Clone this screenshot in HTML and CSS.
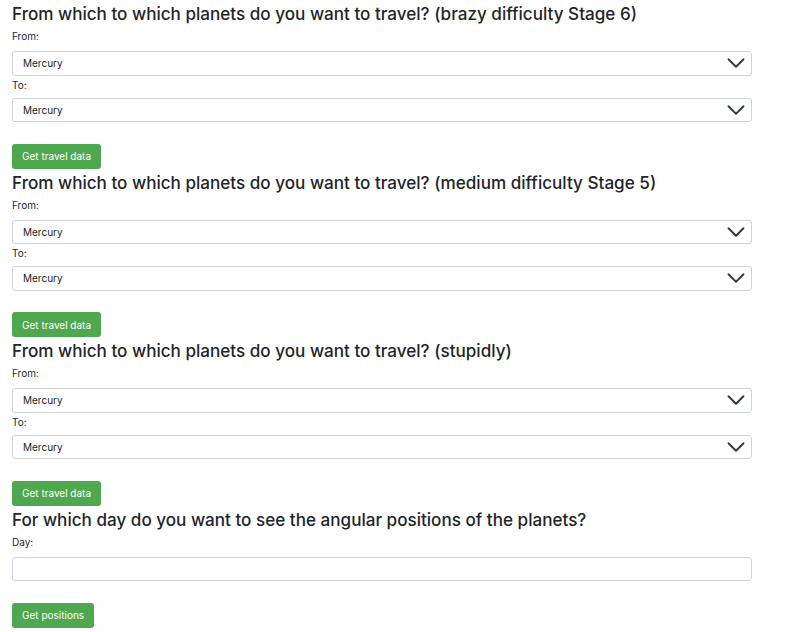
FILE: index.html
```html
<!DOCTYPE html>
<html lang="en">
<head>
<meta charset="utf-8">
<title>Planet travel</title>
<link rel="stylesheet" href="styles.css">
</head>
<body>
<div class="page">
  <section class="block">
    <h3 class="title">From which to which planets do you want to travel? (brazy difficulty Stage 6)</h3>
    <label class="label">From:</label>
    <select class="field select"><option>Mercury</option></select>
    <label class="label label-to">To:</label>
    <select class="field select"><option>Mercury</option></select>
    <button class="btn">Get travel data</button>
  </section>
  <section class="block">
    <h3 class="title">From which to which planets do you want to travel? (medium difficulty Stage 5)</h3>
    <label class="label">From:</label>
    <select class="field select"><option>Mercury</option></select>
    <label class="label label-to">To:</label>
    <select class="field select"><option>Mercury</option></select>
    <button class="btn">Get travel data</button>
  </section>
  <section class="block">
    <h3 class="title">From which to which planets do you want to travel? (stupidly)</h3>
    <label class="label">From:</label>
    <select class="field select"><option>Mercury</option></select>
    <label class="label label-to">To:</label>
    <select class="field select"><option>Mercury</option></select>
    <button class="btn">Get travel data</button>
  </section>
  <section class="block">
    <h3 class="title">For which day do you want to see the angular positions of the planets?</h3>
    <label class="label">Day:</label>
    <input class="field input" type="text">
    <button class="btn">Get positions</button>
  </section>
</div>
</body>
</html>
```
FILE: styles.css
```css
html, body {
  margin: 0;
  padding: 0;
  background: #fff;
}
body {
  font-family: Inter, "Liberation Sans", sans-serif;
  color: #212529;
}
.page {
  padding: 0 12px;
  width: 740px;
}
.block {
  display: flex;
  flex-direction: column;
  align-items: flex-start;
}
.title {
  margin: 0;
  font-size: 17.1px;
  font-weight: 500;
  line-height: 28px;
  white-space: nowrap;
}
.label {
  display: block;
  margin-top: 2px;
  margin-bottom: 9px;
  font-size: 10px;
  line-height: 12px;
}
.label-to {
  margin-top: 3px;
  margin-bottom: 7px;
}
.field {
  box-sizing: border-box;
  width: 740px;
  height: 24.5px;
  margin: 0;
  border: 1px solid #ced4da;
  border-radius: 3px;
  background-color: #fff;
  font-family: inherit;
  font-size: 10px;
  color: #212529;
  padding: 0 10px;
  outline: none;
}
.select {
  appearance: none;
  -webkit-appearance: none;
  background-image: url("data:image/svg+xml,%3csvg xmlns='http://www.w3.org/2000/svg' viewBox='0 0 16 16'%3e%3cpath fill='none' stroke='%23343a40' stroke-linecap='round' stroke-linejoin='round' stroke-width='1.5' d='M2 5l6 6 6-6'/%3e%3c/svg%3e");
  background-repeat: no-repeat;
  background-position: right 5px center;
  background-size: 20px 20px;
}
.btn {
  margin-top: 21.5px;
  height: 25px;
  padding: 0 10px;
  border: none;
  border-radius: 3px;
  background: #4fa84f;
  color: #fff;
  font-family: inherit;
  font-size: 10px;
}
```
